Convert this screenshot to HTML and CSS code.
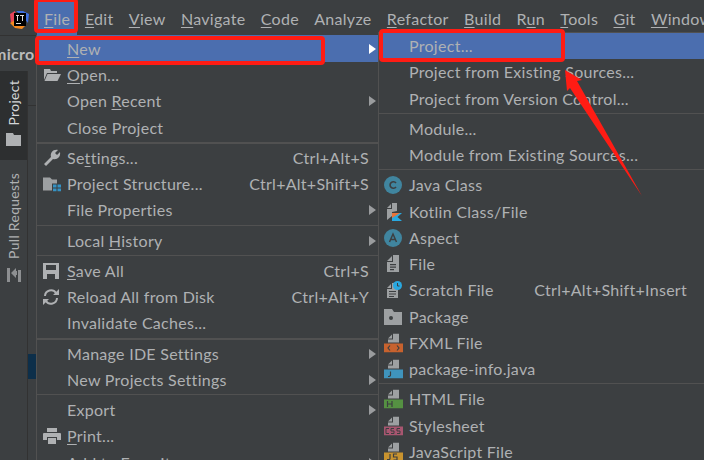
FILE: index.html
```html
<!DOCTYPE html>
<html lang="en">
<head>
    <meta charset="UTF-8">
    <title>IntelliJ IDEA - File menu</title>
    <link rel="stylesheet" href="styles.css">
</head>
<body>
    <div class="menubar">
        <svg class="logo" width="20" height="18" viewBox="0 0 20 18">
            <path d="M1 3L6 0L8 8L2 12Z" fill="#e8445a"/>
            <path d="M7 0L14 0L20 3L19 12L14 6Z" fill="#3d6fe0"/>
            <path d="M1 12L6 17L13 18L17 14L8 8Z" fill="#f58a1f"/>
            <rect x="5" y="2" width="12" height="13" fill="#000"/>
            <rect x="7" y="12" width="5" height="1" fill="#ddd"/>
            <rect x="7" y="4" width="3" height="1" fill="#ddd"/>
            <rect x="8" y="4" width="1" height="6" fill="#ddd"/>
            <rect x="11" y="4" width="4" height="1" fill="#ddd"/>
            <rect x="13" y="4" width="1" height="6" fill="#ddd"/>
        </svg>
        <span class="top-item active"><u>F</u>ile</span>
        <span class="top-item"><u>E</u>dit</span>
        <span class="top-item"><u>V</u>iew</span>
        <span class="top-item"><u>N</u>avigate</span>
        <span class="top-item"><u>C</u>ode</span>
        <span class="top-item">Analyze</span>
        <span class="top-item"><u>R</u>efactor</span>
        <span class="top-item"><u>B</u>uild</span>
        <span class="top-item">R<u>u</u>n</span>
        <span class="top-item"><u>T</u>ools</span>
        <span class="top-item"><u>G</u>it</span>
        <span class="top-item"><u>W</u>indow</span>
    </div>

    <div class="workspace">
        <div class="side-stripe">
            <div class="crumb">micro</div>
            <div class="stripe-tab current">
                <span class="vert">Project</span>
                <svg width="15" height="13" viewBox="0 0 15 13"><path d="M0 0H7L8 2H15V13H0Z" fill="#afb1b3"/></svg>
            </div>
            <div class="stripe-tab">
                <span class="vert">Pull Requests</span>
                <svg width="14" height="15" viewBox="0 0 14 15"><path d="M0 1H3V15H0ZM11 3H14V15H11ZM4 6L9 1V4H10V8H9V11Z" fill="#8d8f91"/></svg>
            </div>
        </div>
        <div class="edge">
            <div class="edge-line"></div>
            <div class="edge-mark"></div>
        </div>
    </div>

    <div class="menu file-menu">
        <div class="row selected"><span class="label"><u>N</u>ew</span><i class="arrow"></i></div>
        <div class="row">
            <svg class="icon" width="18" height="14" viewBox="0 0 18 14"><path d="M1 1H7L8 3H14V5H4L1 12Z" fill="#afb1b3"/><path d="M4.500 6H18L14.500 13H1.500Z" fill="#afb1b3"/></svg>
            <span class="label"><u>O</u>pen...</span>
        </div>
        <div class="row"><span class="label">Open <u>R</u>ecent</span><i class="arrow"></i></div>
        <div class="row"><span class="label">Close Project</span></div>
        <div class="sep thick"></div>
        <div class="row">
            <svg class="icon" width="18" height="18" viewBox="0 0 18 18"><path d="M1 15L8 8C7 4 10 0 15 1L12 4L14 6L17 3C18 8 14 11 10 10L3 17Z" fill="#afb1b3"/></svg>
            <span class="label">Se<u>t</u>tings...</span><span class="keys">Ctrl+Alt+S</span>
        </div>
        <div class="row">
            <svg class="icon" width="18" height="15" viewBox="0 0 18 15"><path d="M0 1H7L9 3H14V7H9V14H0Z" fill="#9da0a2"/><rect x="10" y="8" width="3.500" height="3" fill="#3592c4"/><rect x="14.500" y="8" width="3.500" height="3" fill="#3592c4"/><rect x="10" y="12" width="3.500" height="3" fill="#3592c4"/><rect x="14.500" y="12" width="3.500" height="3" fill="#3592c4"/></svg>
            <span class="label">Project Structure...</span><span class="keys">Ctrl+Alt+Shift+S</span>
        </div>
        <div class="row"><span class="label">File Properties</span><i class="arrow"></i></div>
        <div class="sep"></div>
        <div class="row"><span class="label">Local <u>H</u>istory</span><i class="arrow"></i></div>
        <div class="sep"></div>
        <div class="row">
            <svg class="icon" width="16" height="16" viewBox="0 0 16 16"><path d="M0 0H16V16H0ZM3 2V7H13V2ZM4 11V16H12V11Z" fill="#afb1b3" fill-rule="evenodd"/></svg>
            <span class="label"><u>S</u>ave All</span><span class="keys">Ctrl+S</span>
        </div>
        <div class="row">
            <svg class="icon" width="16" height="16" viewBox="0 0 16 16"><path d="M2 7A6 6 0 0 1 13 4M14 9A6 6 0 0 1 3 12" fill="none" stroke="#afb1b3" stroke-width="2"/><path d="M10 6H16V0ZM6 10H0V16Z" fill="#afb1b3"/></svg>
            <span class="label">Reload All from Disk</span><span class="keys">Ctrl+Alt+Y</span>
        </div>
        <div class="row"><span class="label">Invalidate Caches...</span></div>
        <div class="sep thick"></div>
        <div class="row"><span class="label">Manage IDE Settings</span><i class="arrow"></i></div>
        <div class="row"><span class="label">New Projects Settings</span><i class="arrow"></i></div>
        <div class="sep"></div>
        <div class="row"><span class="label">Export</span><i class="arrow"></i></div>
        <div class="row">
            <svg class="icon" width="18" height="16" viewBox="0 0 18 16"><path d="M4 0H14V4H4ZM1 5H17A1 1 0 0 1 18 6V12H14V9H4V12H0V6A1 1 0 0 1 1 5ZM5 10H13V16H5Z" fill="#afb1b3"/></svg>
            <span class="label"><u>P</u>rint...</span>
        </div>
        <div class="row"><span class="label">Add to Favorites</span><i class="arrow"></i></div>
    </div>

    <div class="menu new-menu">
        <div class="row selected"><span class="label">Project...</span></div>
        <div class="row"><span class="label">Project from Existing Sources...</span></div>
        <div class="row"><span class="label">Project from Version Control...</span></div>
        <div class="sep"></div>
        <div class="row"><span class="label">Module...</span></div>
        <div class="row"><span class="label">Module from Existing Sources...</span></div>
        <div class="sep"></div>
        <div class="row">
            <svg class="icon" width="18" height="18" viewBox="0 0 18 18"><circle cx="9" cy="9" r="9" fill="#40859f"/><path d="M12 7A3.300 3.300 0 1 0 12 11" fill="none" stroke="#3c3f41" stroke-width="1.600"/></svg>
            <span class="label">Java Class</span>
        </div>
        <div class="row">
            <svg class="icon" width="20" height="18" viewBox="0 0 20 18"><path d="M3 5L7 1V5ZM8 0H13V8L8 9V13L3 17V6H8Z" fill="#9da0a2"/><path d="M8 18V10H18L13.500 14L18 18Z" fill="#29a8e0"/><path d="M8 15V10H16Z" fill="#e8743b"/></svg>
            <span class="label">Kotlin Class/File</span>
        </div>
        <div class="row">
            <svg class="icon" width="18" height="18" viewBox="0 0 18 18"><circle cx="9" cy="9" r="9" fill="#40859f"/><path d="M5.500 13L9 5L12.500 13M6.800 10.500H11.200" fill="none" stroke="#3c3f41" stroke-width="1.500"/></svg>
            <span class="label">Aspect</span>
        </div>
        <div class="row">
            <svg class="icon" width="18" height="18" viewBox="0 0 18 18"><path d="M3 6L8 1V6ZM9 0H15V17H3V7H9ZM6 9V10.200H12V9ZM6 11.500V12.700H12V11.500ZM6 14V15.200H10V14Z" fill="#9da0a2" fill-rule="evenodd"/></svg>
            <span class="label">File</span>
        </div>
        <div class="row">
            <svg class="icon" width="18" height="18" viewBox="0 0 18 18"><path d="M3 7L7 3V7ZM8 2H11V8H14V17H3V8H8ZM5 10V11H12V10ZM5 12.500V13.500H12V12.500ZM5 15V16H10V15Z" fill="#9da0a2" fill-rule="evenodd"/><circle cx="13.500" cy="4.500" r="4.500" fill="#29a8e0"/><path d="M13.500 2V5H15.500" fill="none" stroke="#3c3f41"/></svg>
            <span class="label">Scratch File</span><span class="keys">Ctrl+Alt+Shift+Insert</span>
        </div>
        <div class="row">
            <svg class="icon" width="18" height="16" viewBox="0 0 18 16"><path d="M0 0H8L10 3H18V16H0Z" fill="#9da0a2"/><circle cx="7" cy="9" r="2" fill="#3c3f41"/></svg>
            <span class="label">Package</span>
        </div>
        <div class="row">
            <svg class="icon" width="19" height="19" viewBox="0 0 19 19"><path d="M4 5L8 1V5ZM9 0H15V9H4V6H9Z" fill="#9da0a2"/><rect y="10" width="19" height="9" fill="#c7622e"/><path d="M6 12L4 14.500L6 17M13 12L15 14.500L13 17" fill="none" stroke="#3c3f41" stroke-width="1.200"/></svg>
            <span class="label">FXML File</span>
        </div>
        <div class="row">
            <svg class="icon" width="19" height="19" viewBox="0 0 19 19"><path d="M4 5L8 1V5ZM9 0H15V9H4V6H9Z" fill="#9da0a2"/><rect y="10" width="19" height="9" fill="#3f94bd"/><path d="M6.500 12V15.500Q6.500 17 4 17" fill="none" stroke="#3c3f41" stroke-width="1.200"/></svg>
            <span class="label">package-info.java</span>
        </div>
        <div class="sep"></div>
        <div class="row">
            <svg class="icon" width="19" height="19" viewBox="0 0 19 19"><path d="M4 5L8 1V5ZM9 0H15V9H4V6H9Z" fill="#9da0a2"/><rect y="10" width="19" height="9" fill="#559142"/><path d="M3.500 11.500V17.500M8 11.500V17.500M3.500 14.500H8" fill="none" stroke="#3c3f41" stroke-width="1.200"/></svg>
            <span class="label">HTML File</span>
        </div>
        <div class="row">
            <svg class="icon" width="19" height="19" viewBox="0 0 19 19"><path d="M4 5L8 1V5ZM9 0H15V9H4V6H9Z" fill="#9da0a2"/><rect y="10" width="19" height="9" fill="#a85670"/><path d="M5 12H2V17H5M10 12H7V14.500H10V17H7M16 12H13V14.500H16V17H13" fill="none" stroke="#3c3f41" stroke-width="1"/></svg>
            <span class="label">Stylesheet</span>
        </div>
        <div class="row">
            <svg class="icon" width="19" height="19" viewBox="0 0 19 19"><path d="M4 5L8 1V5ZM9 0H15V9H4V6H9Z" fill="#9da0a2"/><rect y="10" width="19" height="9" fill="#c8932f"/><path d="M6 11.500V16Q6 17.500 3 17M13 11.500H9.500V14.500H13V17.500H9.500" fill="none" stroke="#3c3f41" stroke-width="1.200"/></svg>
            <span class="label">JavaScript File</span>
        </div>
    </div>

    <div class="mark mark-file"></div>
    <div class="mark mark-new"></div>
    <div class="mark mark-project"></div>
    <svg class="red-arrow" width="704" height="460" viewBox="0 0 704 460">
        <path d="M565 70L582 80L577 81L642 196L570 88L567 91Z" fill="#ff1c14"/>
    </svg>
</body>
</html>
```

FILE: styles.css
```css
* {
    box-sizing: border-box;
}
html, body {
    margin: 0;
    height: 460px;
    overflow: hidden;
}
body {
    position: relative;
    width: 704px;
    background: #3c3f41;
    color: #afb1b3;
    font-family: Lato, "Open Sans", sans-serif;
    font-size: 16px;
    letter-spacing: 0.28px;
}
u {
    text-underline-offset: 2px;
}
.menubar {
    display: flex;
    align-items: flex-start;
    height: 36px;
    padding-left: 9px;
    white-space: nowrap;
    overflow: hidden;
    border-bottom: 1px solid #323232;
}
.logo {
    flex: none;
    margin-top: 11px;
    margin-right: 8px;
}
.top-item {
    flex: none;
    height: 35px;
    padding: 9px 7.7px 0;
    line-height: 20px;
}
.top-item.active {
    padding: 9px 7px 0;
    background: #4b6eaf;
}
.workspace {
    display: flex;
    height: 424px;
}
.side-stripe {
    width: 28px;
    border-right: 1px solid #323232;
}
.crumb {
    position: relative;
    width: 42px;
    height: 35px;
    padding-top: 8px;
    margin-left: -7px;
    background: #3c3f41;
    font-weight: 700;
    color: #bbbbbb;
    white-space: nowrap;
    overflow: hidden;
    text-align: right;
    padding-right: 1px;
}
.stripe-tab {
    display: flex;
    flex-direction: column;
    align-items: center;
    gap: 8px;
    padding: 9px 0 0;
}
.stripe-tab.current {
    height: 89px;
    background: #2d2f30;
    color: #d4d6d8;
}
.stripe-tab + .stripe-tab {
    padding-top: 13px;
}
.vert {
    writing-mode: vertical-rl;
    transform: rotate(180deg);
    font-size: 14px;
    line-height: 18px;
}
.edge {
    width: 8px;
}
.edge-line {
    height: 1px;
    margin-top: 69px;
    background: #323232;
}
.edge-mark {
    height: 25px;
    margin-top: 248px;
    background: #0d2f4a;
}
.menu {
    position: absolute;
    background: #3c3f41;
    border: 1px solid #515151;
}
.file-menu {
    left: 36px;
    top: 35px;
    width: 343px;
    height: 440px;
    border-top: 0;
}
.new-menu {
    left: 378px;
    top: 32px;
    width: 340px;
    height: 440px;
}
.row {
    position: relative;
    display: flex;
    align-items: center;
    height: 26.25px;
    padding: 0 9px 1px 30px;
    white-space: nowrap;
}
.row.selected {
    background: #4b6eaf;
}
.file-menu .row:first-child {
    height: 27px;
    padding-bottom: 0;
}
.keys {
    margin-left: auto;
}
.new-menu .keys {
    margin-right: 21px;
}
.icon {
    position: absolute;
    left: 5px;
    top: 50%;
    transform: translateY(-50%);
}
.file-menu .icon {
    left: 6px;
}
.arrow {
    position: absolute;
    right: 2px;
    top: 50%;
    margin-top: -5px;
    border-left: 7px solid #9a9c9e;
    border-top: 5px solid transparent;
    border-bottom: 5px solid transparent;
}
.selected .arrow {
    border-left-color: #ffffff;
}
.sep {
    height: 4px;
    padding-top: 1px;
}
.sep::after {
    content: "";
    display: block;
    height: 1px;
    background: #515151;
}
.sep.thick::after {
    height: 2px;
}
.mark {
    position: absolute;
    border: 4px solid #ff1c14;
    border-radius: 4px;
}
.mark-file {
    left: 34px;
    top: -2px;
    width: 44px;
    height: 35px;
}
.mark-new {
    left: 35px;
    top: 36px;
    width: 290px;
    height: 29px;
}
.mark-project {
    left: 379px;
    top: 29px;
    width: 186px;
    height: 33px;
}
.red-arrow {
    position: absolute;
    left: 0;
    top: 0;
}
```
